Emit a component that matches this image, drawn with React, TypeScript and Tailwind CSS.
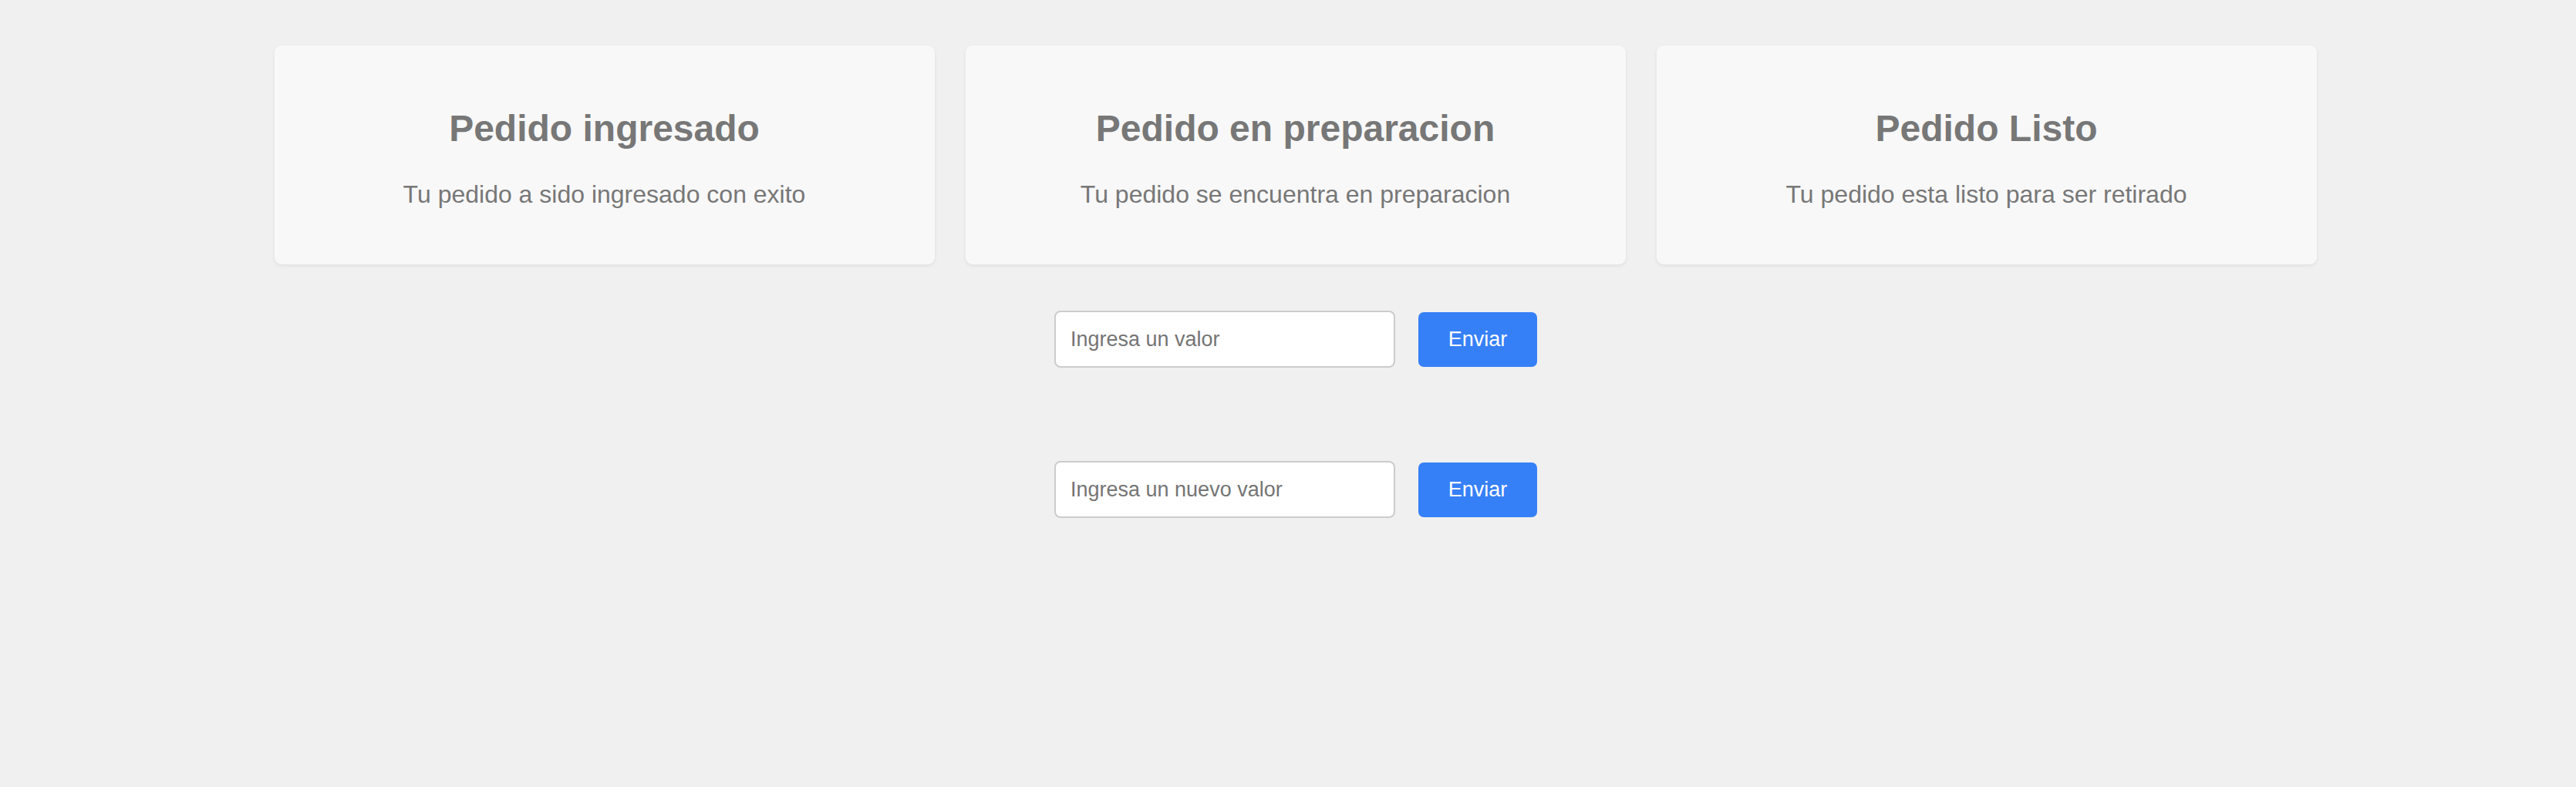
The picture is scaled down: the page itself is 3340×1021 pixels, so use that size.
const cards = [
  { title: "Pedido ingresado", text: "Tu pedido a sido ingresado con exito" },
  { title: "Pedido en preparacion", text: "Tu pedido se encuentra en preparacion" },
  { title: "Pedido Listo", text: "Tu pedido esta listo para ser retirado" },
];

function InputRow({ placeholder }: { placeholder: string }) {
  return (
    <div className="flex items-center justify-center gap-[30px] pl-[20px]">
      <input
        type="text"
        placeholder={placeholder}
        className="w-[442px] h-[74px] rounded-[8px] border-2 border-[#cccccc] bg-white px-[19px] text-[27px] text-[#333] placeholder:text-[#757575] outline-none"
      />
      <button className="w-[154px] h-[71px] rounded-[7px] bg-[#3680f7] text-white text-[27px]">
        Enviar
      </button>
    </div>
  );
}

export default function App() {
  return (
    <div
      className="min-h-screen bg-[#f0f0f0] pt-[59px]"
      style={{ fontFamily: '"Liberation Sans", Arial, sans-serif' }}
    >
      {/* Status cards */}
      <div className="flex justify-center gap-[40px] pl-[19px]">
        {cards.map((c) => (
          <div
            key={c.title}
            className="w-[856px] h-[284px] pt-[8px] rounded-[9px] bg-[#f8f8f8] shadow-[0_2px_5px_rgba(0,0,0,0.07)] flex flex-col items-center justify-center text-[#777777]"
          >
            <h2 className="text-[48px] leading-[55px] font-bold">{c.title}</h2>
            <p className="mt-[40px] text-[32px] leading-[37px]">{c.text}</p>
          </div>
        ))}
      </div>

      {/* Forms */}
      <div className="mt-[60px] flex flex-col gap-[121px]">
        <InputRow placeholder="Ingresa un valor" />
        <InputRow placeholder="Ingresa un nuevo valor" />
      </div>
    </div>
  );
}
